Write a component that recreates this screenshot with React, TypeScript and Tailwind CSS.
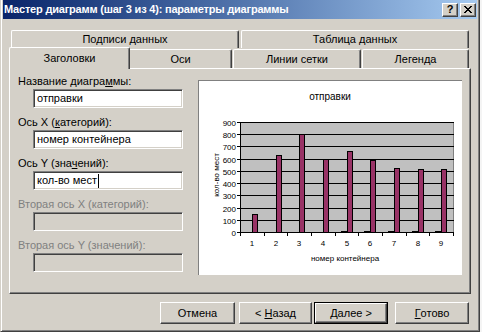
import React from "react";

const raised =
  "border border-t-white border-l-white border-r-[#404040] border-b-[#404040] shadow-[inset_-1px_-1px_0_#808080]";
const sunken =
  "border border-t-[#808080] border-l-[#808080] border-r-white border-b-white shadow-[inset_1px_1px_0_#404040,inset_-1px_-1px_0_#d4d0c8]";

const Field = ({
  label,
  value,
  disabled,
  cursor,
  first,
}: {
  label: React.ReactNode;
  value?: string;
  disabled?: boolean;
  cursor?: boolean;
  first?: boolean;
}) => (
  <div className={first ? "" : "mt-[8px]"}>
    <div
      className={`h-[13px] leading-[13px] whitespace-nowrap ${
        disabled ? "text-[#808080]" : "text-black"
      }`}
    >
      {label}
    </div>
    <div
      className={`ml-[15px] mt-[1px] w-[150px] h-[19px] ${sunken} ${
        disabled ? "bg-[#d4d0c8]" : "bg-white"
      } flex items-center pl-[3px] leading-none`}
    >
      {value}
      {cursor && <span className="ml-px w-px h-[14px] bg-black" />}
    </div>
  </div>
);

const values = [145, 628, 805, 595, 660, 588, 522, 515, 515];

const Chart = () => {
  const x0 = 41;
  const x1 = 254;
  const yTop = 41;
  const yBot = 151;
  const cw = (x1 - x0) / 9;
  const yOf = (v: number) => yBot - (v * (yBot - yTop)) / 900;
  const grid = [0, 1, 2, 3, 4, 5, 6, 7, 8, 9];
  return (
    <svg width="262" height="193" className="block" fontFamily="'Liberation Sans', Arial, sans-serif">
      <text x="131" y="19" fontSize="10" textAnchor="middle" fill="#000">
        отправки
      </text>
      <rect x={x0 + 0.5} y={yTop + 0.5} width={x1 - x0} height={yBot - yTop} fill="#c0c0c0" stroke="#808080" shapeRendering="crispEdges" />
      {grid.map((k) => {
        const y = Math.round(yOf(k * 100)) + 0.5;
        return (
          <g key={k}>
            <line x1={38} x2={x1 + 0.5} y1={y} y2={y} stroke="#000" shapeRendering="crispEdges" />
            <text x="37" y={y + 3} fontSize="8" textAnchor="end" fill="#000">
              {k * 100}
            </text>
          </g>
        );
      })}
      <line x1={x0 + 0.5} x2={x0 + 0.5} y1={yTop} y2={yBot + 1} stroke="#000" shapeRendering="crispEdges" />
      {grid.map((k) => {
        const x = Math.round(x0 + k * cw) + 0.5;
        return <line key={k} x1={x} x2={x} y1={yBot} y2={yBot + 4} stroke="#000" shapeRendering="crispEdges" />;
      })}
      {values.map((v, i) => {
        const c = Math.round(x0 + (i + 0.5) * cw);
        const top = Math.round(yOf(v));
        return (
          <g key={i}>
            {i >= 4 && (
              <line x1={c - 6} x2={c} y1={yBot - 0.5} y2={yBot - 0.5} stroke="#000" shapeRendering="crispEdges" />
            )}
            <rect x={c + 0.5} y={top + 0.5} width={5} height={yBot - top} fill="#993366" stroke="#000" shapeRendering="crispEdges" />
            <text x={c} y="165" fontSize="8" textAnchor="middle" fill="#000">
              {i + 1}
            </text>
          </g>
        );
      })}
      <text x="146" y="180" fontSize="8" textAnchor="middle" fill="#000">
        номер контейнера
      </text>
      <text transform="translate(20,94) rotate(-90)" fontSize="8" textAnchor="middle" fill="#000">
        кол-во мест
      </text>
    </svg>
  );
};

const App = () => {
  return (
    <div className="flex w-[482px] h-[332px] overflow-hidden bg-[#f0f0f0] font-['Liberation_Sans',Arial,sans-serif] text-[11px] text-black">
      {/* dialog window */}
      <div className="w-[480px] h-[332px] bg-[#d4d0c8] border-l border-l-[#d4d0c8] border-r border-r-[#404040] border-b border-b-[#404040] shadow-[inset_1px_0_0_#fff,inset_-1px_-1px_0_#808080] pl-[2px] pr-[2px]">
        {/* title bar */}
        <div className="h-[19px] flex items-center bg-gradient-to-r from-[#0a246a] to-[#a6caf0] pl-[1px] pr-[1px]">
          <span className="font-bold text-white text-[11px] whitespace-nowrap tracking-[-0.2px]">
            Мастер диаграмм (шаг 3 из 4): параметры диаграммы
          </span>
          <div className="ml-auto flex gap-[2px]">
            <div className={`w-[16px] h-[14px] bg-[#d4d0c8] ${raised} flex items-center justify-center font-bold text-[11px] leading-none`}>
              ?
            </div>
            <div className={`w-[16px] h-[14px] bg-[#d4d0c8] ${raised} flex items-center justify-center`}>
              <svg width="8" height="7" viewBox="0 0 8 7" shapeRendering="crispEdges">
                <path d="M0 0h2v1h-2zM6 0h2v1h-2zM1 1h2v1h-2zM5 1h2v1h-2zM2 2h4v1h-4zM3 3h2v1h-2zM2 4h4v1h-4zM1 5h2v1h-2zM5 5h2v1h-2zM0 6h2v1h-2zM6 6h2v1h-2z" fill="#000" />
              </svg>
            </div>
          </div>
        </div>

        {/* tabs */}
        <div className="mt-[11px] flex gap-[2px] ml-[8px] h-[18px]">
          {["Подписи данных", "Таблица данных"].map((t) => (
            <div
              key={t}
              className="w-[228px] h-[18px] border-t border-l border-white border-r border-r-[#404040] shadow-[inset_-1px_0_0_#808080] rounded-tl-[2px] rounded-tr-[2px] flex items-center justify-center"
            >
              {t}
            </div>
          ))}
        </div>
        <div className="relative z-10 flex items-end ml-[6px] h-[20px]">
          <div className="w-[121px] h-[22px] -mb-px bg-[#d4d0c8] border-t border-l border-white border-r border-r-[#404040] shadow-[inset_-1px_0_0_#808080] rounded-tl-[2px] rounded-tr-[2px] flex items-center justify-center pb-[1px]">
            Заголовки
          </div>
          <div className="w-[102px] h-[19px] border-t border-white border-r border-r-[#404040] shadow-[inset_-1px_0_0_#808080] rounded-tr-[2px] flex items-center justify-center">
            Оси
          </div>
          <div className="ml-px w-[128px] h-[19px] border-t border-l border-white border-r border-r-[#404040] shadow-[inset_-1px_0_0_#808080] rounded-tl-[2px] rounded-tr-[2px] flex items-center justify-center">
            Линии сетки
          </div>
          <div className="ml-px w-[107px] h-[19px] border-t border-l border-white border-r border-r-[#404040] shadow-[inset_-1px_0_0_#808080] rounded-tl-[2px] rounded-tr-[2px] flex items-center justify-center">
            Легенда
          </div>
        </div>

        {/* panel */}
        <div className="ml-[6px] w-[462px] h-[226px] border-t border-l border-white border-r border-b border-r-[#404040] border-b-[#404040] shadow-[inset_-1px_-1px_0_#808080] flex">
          <div className="pl-[8px] pt-[6px] w-[181px]">
            <Field first label={<>Название диагра<u>м</u>мы:</>} value="отправки" />
            <Field label={<>Ось X (<u>к</u>атегорий):</>} value="номер контейнера" />
            <Field label={<>Ось Y (зна<u>ч</u>ений):</>} value="кол-во мест" cursor />
            <Field disabled label="Вторая ось X (категорий):" />
            <Field disabled label="Вторая ось Y (значений):" />
          </div>
          <div className="mt-[11px] ml-[7px] w-[264px] h-[195px] bg-white border-t border-l border-[#808080]">
            <Chart />
          </div>
        </div>

        {/* buttons */}
        <div className="mt-[8px] flex">
          <div className={`ml-[157px] w-[75px] h-[22px] ${raised} flex items-center justify-center`}>Отмена</div>
          <div className={`ml-[4px] w-[73px] h-[22px] ${raised} flex items-center justify-center`}>
            &lt; <u className="ml-[3px]">Н</u>азад
          </div>
          <div className="ml-[2px] w-[74px] h-[22px] border border-black">
            <div className={`w-full h-full ${raised} flex items-center justify-center`}>
              <u>Д</u>алее &gt;
            </div>
          </div>
          <div className={`ml-[7px] w-[74px] h-[22px] ${raised} flex items-center justify-center`}>
            <u>Г</u>отово
          </div>
        </div>
      </div>
      <div className="w-[2px] h-full bg-[#f4f4f4]" />
    </div>
  );
};

export default App;
